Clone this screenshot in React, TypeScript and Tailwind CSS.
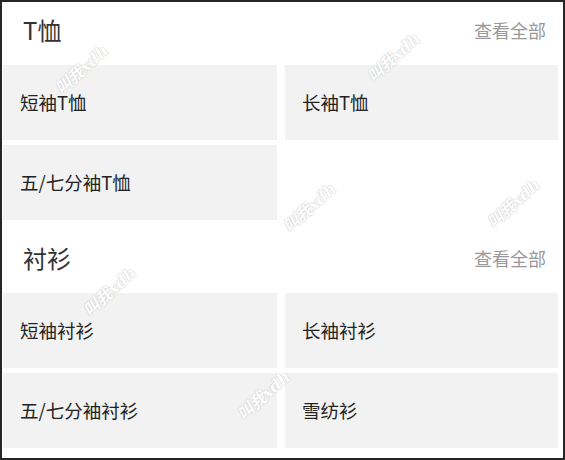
const sections = [
  { title: "T恤", items: ["短袖T恤", "长袖T恤", "五/七分袖T恤"] },
  { title: "衬衫", items: ["短袖衬衫", "长袖衬衫", "五/七分袖衬衫", "雪纺衫"] },
];

// faint signature stamps scattered over the page
const marks = [
  { left: 48, top: 56 },
  { left: 360, top: 44 },
  { left: 276, top: 194 },
  { left: 480, top: 190 },
  { left: 76, top: 278 },
  { left: 230, top: 382 },
];

const font = { fontFamily: "'Noto Sans CJK SC', 'Noto Sans', sans-serif" };

export default function App() {
  return (
    <div
      className="relative w-[565px] h-[460px] overflow-hidden bg-white border-2 border-[#262626] pl-[1px] pr-[5px]"
      style={font}
    >
      {sections.map((s, i) => (
        <section key={s.title}>
          <div
            className={
              i === 0
                ? "h-[63px] flex items-center justify-between pb-[7px] pl-[20px] pr-[12px]"
                : "h-[73px] flex items-center justify-between pt-[3px] pl-[20px] pr-[12px]"
            }
          >
            <span className="text-[24px] text-[#333]">{s.title}</span>
            <span className="text-[18px] text-[#999]">查看全部</span>
          </div>
          <div className="grid grid-cols-[274px_273px] gap-x-[8px] gap-y-[5px]">
            {s.items.map((it) => (
              <div key={it} className="h-[75px] bg-[#f2f2f2] flex items-center pl-[17px]">
                <span className="text-[18.5px] text-[#222]">{it}</span>
              </div>
            ))}
          </div>
        </section>
      ))}

      {marks.map((m, i) => (
        <span
          key={i}
          className="absolute pointer-events-none italic font-bold text-[16px] text-white -rotate-[42deg] [text-shadow:0_0_1px_#c4c4c4,0_0_2px_#d4d4d4]"
          style={{ left: m.left, top: m.top, fontFamily: "'DejaVu Serif', 'Noto Sans CJK SC', serif" }}
        >
          叫我xdh
        </span>
      ))}
    </div>
  );
}
